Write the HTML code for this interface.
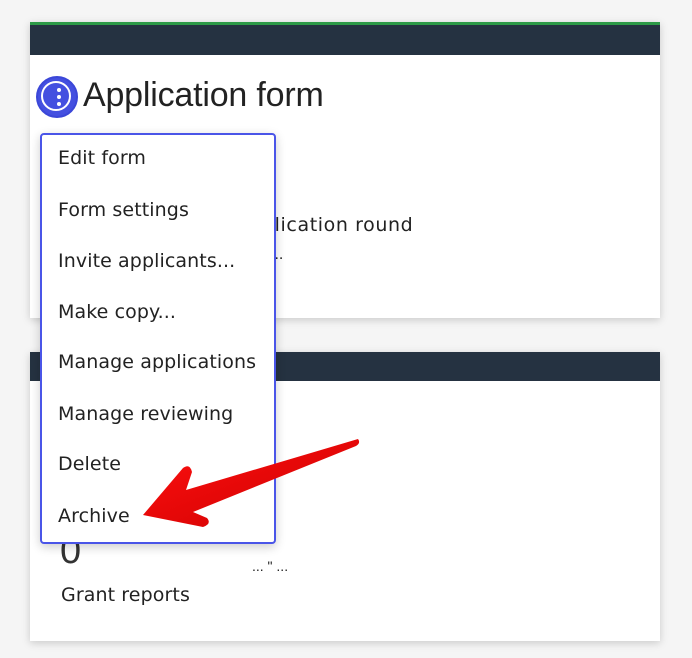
<!DOCTYPE html>
<html><head><style>
body{margin:0;width:692px;height:658px;background:#f5f5f5;font-family:"Liberation Sans",sans-serif;position:relative;overflow:hidden;color:#222}
.card{position:absolute;left:30px;width:630px;background:#fff;box-shadow:0 2px 8px rgba(0,0,0,.18)}
.bar{background:#253241}
.t{position:absolute;white-space:nowrap}
.d{font-family:"DejaVu Sans",sans-serif;font-size:19px;letter-spacing:0.1px}
.menu{position:absolute;left:40px;top:133px;width:232px;height:407px;border:2px solid #4a55e8;border-radius:4px;background:#fff;box-shadow:0 3px 10px rgba(0,0,0,.2)}
.menu div{position:absolute;left:16px;color:#222}
</style></head><body>
<div class="card" style="top:22px;height:296px">
 <div style="height:3px;background:#2d9a47"></div>
 <div class="bar" style="height:30px"></div>
</div>
<div class="t" style="left:83px;top:76px;font-size:34px;letter-spacing:-0.2px;color:#222">Application form</div>
<div style="position:absolute;left:36px;top:76px;width:38px;height:38px;border-radius:50%;background:#4450e0;border:2px solid #3b47d8"></div>
<div style="position:absolute;width:30px;height:30px;border-radius:50%;border:2px solid #fff;box-sizing:border-box;left:41px;top:81px"></div>
<div style="position:absolute;left:57px;top:88px;width:4px;height:4px;border-radius:50%;background:#fff;box-shadow:0 7px 0 #fff,0 14px 0 #fff"></div>
<div class="t d" style="left:262px;top:214px;letter-spacing:0.6px">plication round</div>
<div class="t" style="left:270px;top:246px;font-size:16px">...</div>
<div class="card" style="top:352px;height:289px">
 <div class="bar" style="height:29px"></div>
</div>
<div class="t" style="left:60px;top:530px;font-size:38px;color:#333">0</div>
<div class="t" style="left:252px;top:558px;font-size:14px">... " ...</div>
<div class="t d" style="left:61px;top:584px">Grant reports</div>
<div class="menu">
<div class="d" style="top:12px">Edit form</div>
<div class="d" style="top:64px">Form settings</div>
<div class="d" style="top:115px">Invite applicants...</div>
<div class="d" style="top:166px">Make copy...</div>
<div class="d" style="top:216px">Manage applications</div>
<div class="d" style="top:268px">Manage reviewing</div>
<div class="d" style="top:318px">Delete</div>
<div class="d" style="top:370px">Archive</div>
</div>
<svg style="position:absolute;left:0;top:0" width="692" height="658">
<defs><linearGradient id="g" x1="0" y1="0" x2="1" y2="1"><stop offset="0" stop-color="#ff1010"/><stop offset="1" stop-color="#cc0000"/></linearGradient></defs>
<path d="M358 439 Q361 443 356 446 L193 512 L207 518 Q212 524 203 527 L143 515 L183 468 Q190 463 192 472 L186 490 Z" fill="url(#g)"/>
</svg>
</body></html>
